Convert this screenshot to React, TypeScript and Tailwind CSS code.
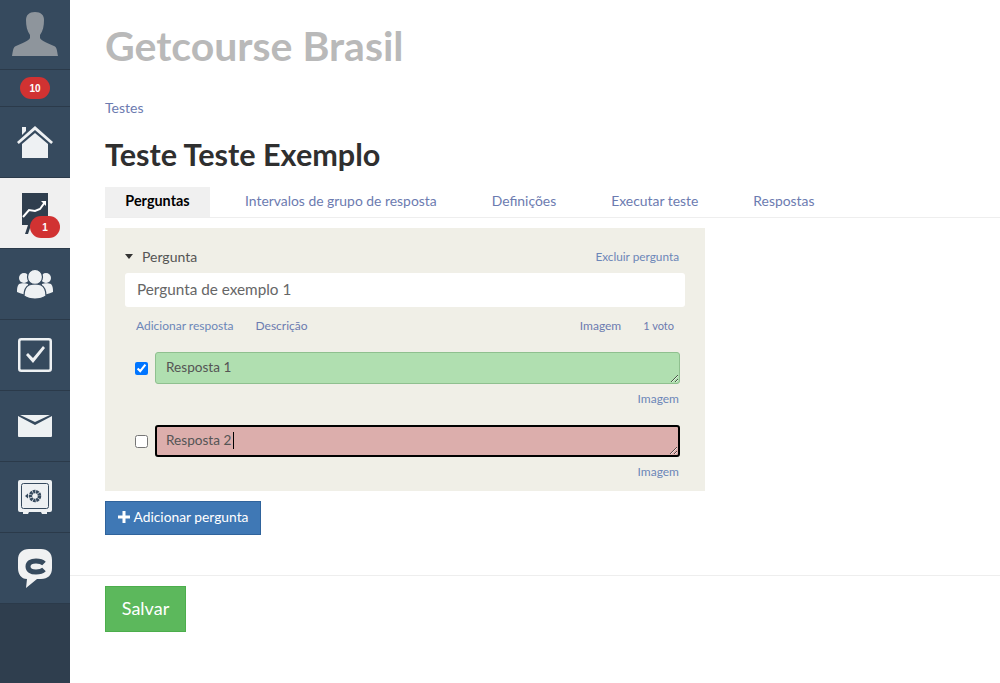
import React from "react";

const Sep = "border-b border-[#2b3a4a]";

function Item({ children, active }: { children: React.ReactNode; active?: boolean }) {
  return (
    <div className={`relative h-[71px] flex items-center justify-center ${Sep} ${active ? "bg-[#f0f0f0]" : "bg-[#364a5e]"}`}>
      {children}
    </div>
  );
}

function Badge({ children, className }: { children: React.ReactNode; className?: string }) {
  return (
    <span className={`flex items-center justify-center h-[22px] w-[30px] rounded-[11px] bg-[#d13232] text-white text-[10px] font-bold font-['Liberation_Sans',sans-serif] ${className ?? ""}`}>
      {children}
    </span>
  );
}

function Tab({ children, active }: { children: React.ReactNode; active?: boolean }) {
  return (
    <div className={`h-[30px] flex items-center justify-center pb-[2px] px-5 mr-[15px] ${active ? "w-[105px] bg-[#f0f0f0] text-black font-bold text-[14.4px]" : "text-[#6c7bb0] text-[13.9px]"}`}>
      {children}
    </div>
  );
}

function Answer({ value, bg, border, checked, caret }: { value: string; bg: string; border: string; checked?: boolean; caret?: boolean }) {
  return (
    <div className="flex flex-col">
      <div className="flex items-center">
        <input type="checkbox" defaultChecked={checked} className="ml-[10px] w-[13px] h-[13px] m-0" />
        <div className="relative ml-[7px] flex">
          <textarea
            defaultValue={value}
            className={`block w-[525px] h-[32px] rounded-[3px] text-[13.6px] leading-[20px] text-[#555] outline-none ${bg} ${border}`}
          />
          {caret && <span className="absolute left-[78px] top-[7px] h-[17px] w-px bg-black" />}
        </div>
      </div>
      <div className="mt-[8px] pr-[6px] text-right text-[12px] leading-[14px] text-[#6c86b8]">Imagem</div>
    </div>
  );
}

export default function App() {
  return (
    <div className="flex min-h-[683px] bg-white font-['Lato','Noto_Sans',sans-serif]">
      <aside className="w-[70px] shrink-0 bg-[#2f3e4e] flex flex-col">
        <div className={`h-[70px] pb-[2px] bg-[#364a5e] flex items-center justify-center ${Sep}`}>
          <svg width="46" height="44" viewBox="0 0 46 44" fill="#8e959c">
            <path d="M23 0c-6 0-9 3-9 8 0 6 1 11 4 15v3c-1 3-8 5-14 8-3 1-3 5-4 10h46c-1-5-1-9-4-10-6-3-13-5-14-8v-3c3-4 4-9 4-15 0-5-3-8-9-8z" />
          </svg>
        </div>
        <div className={`h-[37px] bg-[#364a5e] flex items-center justify-center ${Sep}`}>
          <Badge>10</Badge>
        </div>
        <Item>
          <svg width="36" height="32" viewBox="0 0 36 32" fill="#eef1f3">
            <path d="M5 1h4v4l-4 4z" />
            <path d="M18 0 36 16l-1.800 2L18 4 1.800 18 0 16z" />
            <path d="M18 7 31 18v14H5V18z" />
          </svg>
        </Item>
        <Item active>
          <svg width="26" height="42" viewBox="0 0 26 42" className="mt-[2px]">
            <rect x="0" y="0" width="26" height="30" fill="#2f3e4e" />
            <path d="M1 24 7 17l6 1 5-2 5-7" fill="none" stroke="#fff" strokeWidth="2" />
            <path d="M19 8h5v5z" fill="#fff" />
            <path d="M0 30h26v2H0zM6 32h3l-3 9H3z" fill="#2f3e4e" />
          </svg>
          <Badge className="absolute left-[30px] top-[38px]">1</Badge>
        </Item>
        <Item>
          <svg width="36" height="30" viewBox="0 0 36 30" fill="#eef1f3">
            <circle cx="7" cy="9" r="5" />
            <circle cx="29" cy="9" r="5" />
            <path d="M2 15c2-1 7-1 9 0l2 11c-4 0-9-1-13-3 0-3 0-6 2-8zM34 15c-2-1-7-1-9 0l-2 11c4 0 9-1 13-3 0-3 0-6-2-8z" />
            <circle cx="18" cy="8" r="7.500" stroke="#364a5e" strokeWidth="1.200" />
            <path d="M12 16c3-1 9-1 12 0 4 2 5 7 5 11-3 2-7 3-11 3s-8-1-11-3c0-4 1-9 5-11z" stroke="#364a5e" strokeWidth="1.200" />
          </svg>
        </Item>
        <Item>
          <svg width="34" height="34" viewBox="0 0 34 34" fill="none">
            <rect x="1.250" y="1.250" width="31.500" height="31.500" rx="2" stroke="#eef1f3" strokeWidth="2.500" />
            <path d="M8 17l2-2 5 5L25 8l2 2-12 15z" fill="#eef1f3" />
          </svg>
        </Item>
        <Item>
          <svg width="34" height="22" viewBox="0 0 34 22" fill="#eef1f3">
            <path d="M0 1l17 9 17-9v20a1 1 0 0 1-1 1H1a1 1 0 0 1-1-1z" />
            <path d="M2 0h30L17 7z" />
          </svg>
        </Item>
        <Item>
          <svg width="34" height="34" viewBox="0 0 34 34">
            <path d="M2 0h30a2 2 0 0 1 2 2v28a2 2 0 0 1-2 2h-3v2h-5l-1-2H11l-1 2H5v-2H2a2 2 0 0 1-2-2V2a2 2 0 0 1 2-2z" fill="#eef1f3" />
            <rect x="3.500" y="3.500" width="27" height="25" rx="2" fill="none" stroke="#364a5e" />
            <circle cx="17" cy="16" r="4.500" fill="none" stroke="#364a5e" strokeWidth="3.500" strokeDasharray="2.500 0.600" />
            <path d="M7 16l3-2.500v5z" fill="#364a5e" />
          </svg>
        </Item>
        <Item>
          <svg width="34" height="39" viewBox="0 0 34 39">
            <path d="M11 0h12c7 0 11 4 11 11v8c0 7-4 11-11 11h-4L8 39l1-9C3 30 0 25 0 19v-8C0 4 4 0 11 0z" fill="#f0f1f2" />
            <path d="M26 14.500C24.500 13 21.500 12 18 12c-5 0-8 2-8 5.500s3 5.500 8 5.500c3.500 0 6.500-1 8-2.500" fill="none" stroke="#364a5e" strokeWidth="5" />
          </svg>
        </Item>
      </aside>

      <main className="flex-1 min-w-0 flex flex-col text-[#333]">
        <div className="pl-[35px] pt-[23px] text-[41px] leading-[46px] font-bold text-[#b9b9b9]">Getcourse Brasil</div>
        <div className="pl-[35px] mt-[31px] text-[14px] leading-[16px] text-[#6c7bb0]">Testes</div>
        <h1 className="pl-[35px] mt-[21px] text-[30.600px] leading-[36px] font-bold text-[#2f2f2f]">Teste Teste Exemplo</h1>
        <div className="ml-[35px] mt-[14px] flex border-b border-[#eeeeee] h-[31px]">
          <Tab active>Perguntas</Tab>
          <Tab>Intervalos de grupo de resposta</Tab>
          <Tab>Definições</Tab>
          <Tab>Executar teste</Tab>
          <Tab>Respostas</Tab>
        </div>

        <section className="ml-[35px] mt-[10px] w-[600px] h-[263px] bg-[#f0efe7] pt-[19px] pl-[20px] pr-[20px]">
          <div className="flex items-center justify-between pr-[6px] h-[18px]">
            <div className="flex items-center text-[14px] text-[#555]">
              <span className="w-0 h-0 mr-[9px] border-x-[4px] border-x-transparent border-t-[5px] border-t-[#333]" />
              Pergunta
            </div>
            <span className="pt-[2px] text-[11.800px] text-[#6c86b8]">Excluir pergunta</span>
          </div>
          <div className="mt-[8px] h-[34px] pb-[2px] rounded-[3px] bg-white flex items-center px-[12px] text-[15.300px] text-[#666]">Pergunta de exemplo 1</div>
          <div className="mt-[12px] flex justify-between pl-[11px] pr-[11px] text-[12px] leading-[14px] text-[#6c7bb0]">
            <div className="flex gap-[22px]">
              <span className="text-[#6c86b8]">Adicionar resposta</span>
              <span>Descrição</span>
            </div>
            <div className="flex gap-[22px]">
              <span>Imagem</span>
              <span className="text-[11px]">1 voto</span>
            </div>
          </div>
          <div className="mt-[19px] flex flex-col gap-[19px]">
            <Answer value="Resposta 1" bg="bg-[#b0dfb0]" border="border border-[#8fc08f] px-[10px] py-[4px]" checked />
            <Answer value="Resposta 2" bg="bg-[#dcaeac]" border="border-2 border-black px-[9px] py-[3px]" caret />
          </div>
        </section>

        <button className="ml-[35px] mt-[10px] w-[156px] h-[34px] pb-[2px] bg-[#3f78b5] border border-[#2f639c] text-white text-[13.800px] flex items-center justify-center gap-[4px]">
          <svg width="12" height="12" viewBox="0 0 12 12" fill="#fff"><path d="M4.500 0h3v4.500H12v3H7.500V12h-3V7.500H0v-3h4.500z" /></svg>
          Adicionar pergunta
        </button>

        <div className="mt-[40px] border-t border-[#eeeeee]" />
        <button className="ml-[35px] mt-[10px] w-[81px] h-[46px] pb-[2px] bg-[#5cb85c] border border-[#4cae4c] text-white text-[18px] flex items-center justify-center">Salvar</button>
      </main>
    </div>
  );
}
